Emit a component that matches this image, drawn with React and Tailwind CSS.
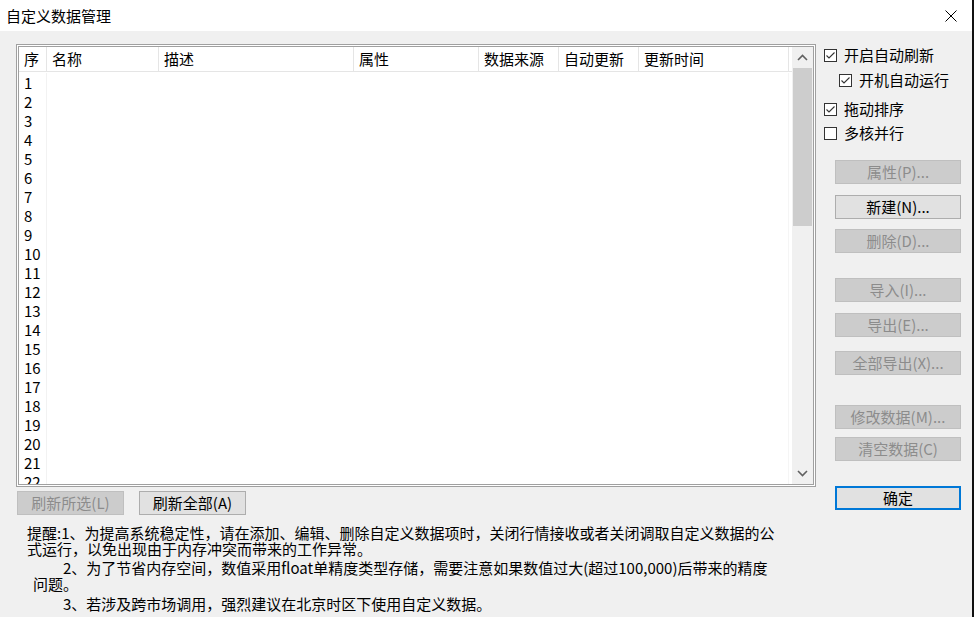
import React from "react";

const font = "font-['Noto_Sans_CJK_SC',sans-serif]";

const columns = [
  { name: "序", w: "w-[28px]" },
  { name: "名称", w: "w-[112px]" },
  { name: "描述", w: "w-[195px]" },
  { name: "属性", w: "w-[125px]" },
  { name: "数据来源", w: "w-[80px]" },
  { name: "自动更新", w: "w-[80px]" },
  { name: "更新时间", w: "w-[150px]" },
];

const rows = Array.from({ length: 22 }, (_, i) => i + 1);

function Check({ checked, label, className = "" }) {
  return (
    <div className={`flex items-center h-[20px] gap-[7px] ${className}`}>
      <span className="w-[13px] h-[13px] border border-[#333333] bg-white flex items-center justify-center">
        {checked && (
          <svg width="11" height="11" viewBox="0 0 11 11">
            <polyline points="1.5,5.5 4,8 9.5,2.5" fill="none" stroke="#333333" strokeWidth="1.1" />
          </svg>
        )}
      </span>
      <span className="text-[15px] leading-[20px] text-black">{label}</span>
    </div>
  );
}

function Btn({ children, disabled, primary, className = "", w = "w-[126px]" }) {
  let look = "bg-[#e1e1e1] border border-[#adadad] text-black";
  if (disabled) look = "bg-[#cccccc] border border-[#bfbfbf] text-[#8c8c8c]";
  if (primary) look = "bg-[#e1e1e1] border-2 border-[#0078d7] text-black";
  return (
    <div className={`${w} h-[24px] flex items-center justify-center text-[15px] leading-[20px] ${look} ${className}`}>
      {children}
    </div>
  );
}

function Chevron({ up }) {
  return (
    <svg width="11" height="7" viewBox="0 0 11 7">
      <polyline
        points={up ? "1,6 5.5,1.5 10,6" : "1,1 5.5,5.5 10,1"}
        fill="none"
        stroke="#606060"
        strokeWidth="1.6"
      />
    </svg>
  );
}

export default function App() {
  return (
    <div className={`w-[974px] h-[617px] bg-[#f0f0f0] flex flex-col overflow-hidden border-r-2 border-[#111111] ${font}`}>
      {/* title bar */}
      <div className="h-[31px] bg-white flex items-center justify-between pl-[6px] pr-[15px] shrink-0">
        <span className="text-[15px] leading-[20px] text-black">自定义数据管理</span>
        <svg width="12" height="12" viewBox="0 0 12 12">
          <line x1="0.5" y1="0.5" x2="11.5" y2="11.5" stroke="#000" strokeWidth="1" />
          <line x1="11.5" y1="0.5" x2="0.5" y2="11.5" stroke="#000" strokeWidth="1" />
        </svg>
      </div>

      <div className="flex pt-[13px]">
        {/* left side */}
        <div className="ml-[16px] w-[800px] flex flex-col">
          <div className="h-[443px] border border-[#a0a0a0] bg-white p-px">
            <div className="h-full border border-[#a0a0a0] flex overflow-hidden">
              <div className="flex-1 flex flex-col overflow-hidden">
                <div className="h-[25px] shrink-0 flex border-b border-[#e5e5e5]">
                  {columns.map((c) => (
                    <div
                      key={c.name}
                      className={`${c.w} shrink-0 border-r border-[#e5e5e5] pl-[5px] flex items-center text-[15px] leading-[20px] text-black whitespace-nowrap`}
                    >
                      {c.name}
                    </div>
                  ))}
                </div>
                <div className="flex-1 overflow-hidden pt-px">
                  {rows.map((n) => (
                    <div key={n} className="h-[19px] flex">
                      <div className="w-[28px] shrink-0 border-r border-[#f2f2f2] pl-[5px] text-[15px] leading-[19px] text-black">
                        {n}
                      </div>
                      <div className="w-[742px] shrink-0 border-r border-[#f5f5f5]" />
                    </div>
                  ))}
                </div>
              </div>
              {/* scrollbar */}
              <div className="w-[21px] shrink-0 bg-[#f0f0f0] flex flex-col">
                <div className="h-[21px] flex items-center justify-center">
                  <Chevron up />
                </div>
                <div className="h-[158px] mx-px bg-[#cdcdcd]" />
                <div className="flex-1" />
                <div className="h-[21px] flex items-center justify-center">
                  <Chevron />
                </div>
              </div>
            </div>
          </div>

          <div className="flex mt-[4px] ml-px gap-[15px]">
            <Btn disabled w="w-[107px]">刷新所选(L)</Btn>
            <Btn w="w-[107px]">刷新全部(A)</Btn>
          </div>

          <div className="mt-[10px] pl-[11px] text-[15px] leading-[16px] text-black whitespace-nowrap">
            <div>提醒:1、为提高系统稳定性，请在添加、编辑、删除自定义数据项时，关闭行情接收或者关闭调取自定义数据的公</div>
            <div>式运行，以免出现由于内存冲突而带来的工作异常。</div>
            <div className="mt-[3px] pl-[36px]">2、为了节省内存空间，数值采用float单精度类型存储，需要注意如果数值过大(超过100,000)后带来的精度</div>
            <div className="pl-[6px]">问题。</div>
            <div className="mt-[4px] pl-[36px]">3、若涉及跨市场调用，强烈建议在北京时区下使用自定义数据。</div>
          </div>
        </div>

        {/* right side */}
        <div className="ml-[8px] flex flex-col">
          <Check checked label="开启自动刷新" className="mt-px" />
          <Check checked label="开机自动运行" className="mt-[5px] ml-[15px]" />
          <Check checked label="拖动排序" className="mt-[9px]" />
          <Check label="多核并行" className="mt-[4px]" />

          <div className="ml-[11px] flex flex-col">
            <Btn disabled className="mt-[17px]">属性(P)...</Btn>
            <Btn className="mt-[11px]">新建(N)...</Btn>
            <Btn disabled className="mt-[10px]">删除(D)...</Btn>
            <Btn disabled className="mt-[25px]">导入(I)...</Btn>
            <Btn disabled className="mt-[11px]">导出(E)...</Btn>
            <Btn disabled className="mt-[14px]">全部导出(X)...</Btn>
            <Btn disabled className="mt-[30px]">修改数据(M)...</Btn>
            <Btn disabled className="mt-[8px]">清空数据(C)</Btn>
            <Btn primary className="mt-[25px]">确定</Btn>
          </div>
        </div>
      </div>
    </div>
  );
}
